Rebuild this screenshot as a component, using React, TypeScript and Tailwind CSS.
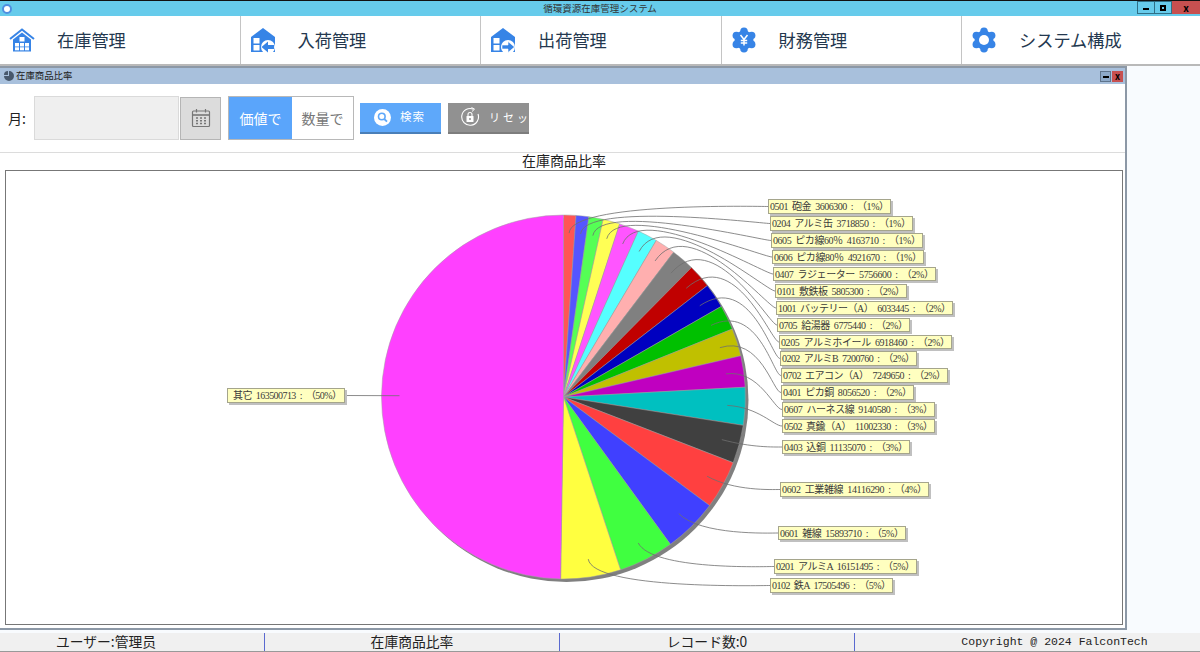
const CX = 563.5;
const CY = 397;
const R = 182;

type Slice = {
  label: string;
  value: number;
  color: string;
  x: number;
  y: number;
  w: number;
  h: number;
};

const slices: Slice[] = [
  { label: "0501 砲金 3606300 : （1%）", value: 3606300, color: "#ff5555", x: 768, y: 199, w: 123, h: 15 },
  { label: "0204 アルミ缶 3718850 : （1%）", value: 3718850, color: "#5555ff", x: 770, y: 216, w: 143, h: 15 },
  { label: "0605 ピカ線60％ 4163710 : （1%）", value: 4163710, color: "#55ff55", x: 771, y: 233, w: 152, h: 15 },
  { label: "0606 ピカ線80％ 4921670 : （1%）", value: 4921670, color: "#ffff55", x: 772, y: 250, w: 152, h: 14 },
  { label: "0407 ラジェーター 5756600 : （2%）", value: 5756600, color: "#ff55ff", x: 773, y: 267, w: 163, h: 14 },
  { label: "0101 敷鉄板 5805300 : （2%）", value: 5805300, color: "#55ffff", x: 775, y: 284, w: 132, h: 14 },
  { label: "1001 バッテリー（A） 6033445 : （2%）", value: 6033445, color: "#ffafaf", x: 776, y: 301, w: 177, h: 14 },
  { label: "0705 給湯器 6775440 : （2%）", value: 6775440, color: "#808080", x: 777, y: 318, w: 133, h: 14 },
  { label: "0205 アルミホイール 6918460 : （2%）", value: 6918460, color: "#c00000", x: 779, y: 335, w: 173, h: 14 },
  { label: "0202 アルミB 7200760 : （2%）", value: 7200760, color: "#0000c0", x: 780, y: 351, w: 137, h: 15 },
  { label: "0702 エアコン（A） 7249650 : （2%）", value: 7249650, color: "#00c000", x: 781, y: 368, w: 167, h: 15 },
  { label: "0401 ピカ銅 8056520 : （2%）", value: 8056520, color: "#c0c000", x: 781, y: 385, w: 133, h: 15 },
  { label: "0607 ハーネス線 9140580 : （3%）", value: 9140580, color: "#c000c0", x: 782, y: 402, w: 153, h: 15 },
  { label: "0502 真鍮（A） 11002330 : （3%）", value: 11002330, color: "#00c0c0", x: 782, y: 419, w: 153, h: 14 },
  { label: "0403 込銅 11135070 : （3%）", value: 11135070, color: "#404040", x: 782, y: 440, w: 128, h: 14 },
  { label: "0602 工業雑線 14116290 : （4%）", value: 14116290, color: "#ff4040", x: 780, y: 482, w: 149, h: 15 },
  { label: "0601 雑線 15893710 : （5%）", value: 15893710, color: "#4040ff", x: 778, y: 526, w: 128, h: 14 },
  { label: "0201 アルミA 16151495 : （5%）", value: 16151495, color: "#40ff40", x: 774, y: 559, w: 143, h: 15 },
  { label: "0102 鉄A 17505496 : （5%）", value: 17505496, color: "#ffff40", x: 770, y: 578, w: 123, h: 15 },
  { label: "其它 163500713 : （50%）", value: 163500713, color: "#ff40ff", x: 227, y: 388, w: 118, h: 15 },
];

const total = slices.reduce((sum, s) => sum + s.value, 0);

function polar(angle: number, radius: number) {
  return {
    x: CX + Math.sin(angle) * radius,
    y: CY - Math.cos(angle) * radius,
  };
}

function PieChart() {
  let acc = 0;
  const parts = slices.map((s) => {
    const start = (acc / total) * Math.PI * 2;
    acc += s.value;
    const end = (acc / total) * Math.PI * 2;
    const a = polar(start, R);
    const b = polar(end, R);
    const large = end - start > Math.PI ? 1 : 0;
    const wedge = `M${CX} ${CY}L${a.x} ${a.y}A${R} ${R} 0 ${large} 1 ${b.x} ${b.y}Z`;
    const mid = (start + end) / 2;
    // the links on the upper right bulge out further than the others
    const bulge = mid < Math.PI / 2 ? 35 * Math.sin(2 * mid) ** 2 : 0;
    const p0 = polar(mid, 164);
    const p1 = polar(mid, 195 + bulge);
    const isLeft = s.x < CX;
    const tx = isLeft ? s.x + s.w : s.x;
    const ty = s.y + s.h / 2;
    const link = isLeft
      ? `M${p0.x} ${p0.y}L${tx} ${ty}`
      : `M${p0.x} ${p0.y}C${p1.x} ${p1.y} ${tx - 8} ${ty} ${tx} ${ty}`;
    return { s, wedge, link };
  });

  return (
    <svg width="1116" height="454" viewBox="6 171 1116 454">
      <circle cx={CX + 3} cy={CY + 3} r={R} fill="#808080" />
      {parts.map((p) => (
        <path key={p.s.label} d={p.wedge} fill={p.s.color} stroke="#a0a0a0" strokeWidth="0.5" />
      ))}
      {parts.map((p) => (
        <path key={p.s.label} d={p.link} fill="none" stroke="#6f6f6f" strokeWidth="0.8" />
      ))}
      {parts.map((p) => (
        <g key={p.s.label}>
          <rect x={p.s.x + 2} y={p.s.y + 2} width={p.s.w} height={p.s.h} fill="#c0c0c0" />
          <rect
            x={p.s.x + 0.5}
            y={p.s.y + 0.5}
            width={p.s.w - 1}
            height={p.s.h - 1}
            fill="#ffffc0"
            stroke="#a5a58c"
          />
          <text
            x={p.s.x < CX ? p.s.x + 6 : p.s.x + 2}
            y={p.s.y + 11}
            textLength={p.s.x < CX ? p.s.w - 9 : p.s.w - 4}
            lengthAdjust="spacing"
            fontSize="10"
            wordSpacing="2"
            fill="#3a3a3a"
            fontFamily="'Liberation Serif','Noto Sans CJK JP',serif"
          >
            {p.s.label}
          </text>
        </g>
      ))}
    </svg>
  );
}

function Gear({ children }: { children: React.ReactNode }) {
  const lobes = [0, 60, 120, 180, 240, 300];
  return (
    <svg width="26" height="26" viewBox="0 0 26 26">
      <circle cx="13" cy="13" r="9.5" fill="#3784e6" />
      {lobes.map((deg) => (
        <circle
          key={deg}
          cx={13 + Math.sin((deg * Math.PI) / 180) * 8.8}
          cy={13 - Math.cos((deg * Math.PI) / 180) * 8.8}
          r="3.8"
          fill="#3784e6"
        />
      ))}
      {children}
    </svg>
  );
}

function StockIcon() {
  return (
    <svg width="26" height="26" viewBox="0 0 26 26">
      <path d="M1 12L13 2.5L25 12" fill="none" stroke="#3784e6" strokeWidth="2" />
      <path d="M4 12.5L13 5.5L22 12.5V24.5H4Z" fill="#3784e6" />
      <rect x="10.5" y="10" width="5" height="4.5" fill="#fff" />
      <rect x="6" y="16" width="4" height="3.5" fill="#fff" />
      <rect x="11" y="16" width="4" height="3.5" fill="#fff" />
      <rect x="16" y="16" width="4" height="3.5" fill="#fff" />
      <rect x="6" y="20.3" width="4" height="3" fill="#fff" />
      <rect x="11" y="20.3" width="4" height="3" fill="#fff" />
      <rect x="16" y="20.3" width="4" height="3" fill="#fff" />
    </svg>
  );
}

function HouseArrowIcon({ out }: { out: boolean }) {
  return (
    <svg width="26" height="26" viewBox="0 0 26 26">
      <path d="M13 1L25 10V25H1V10Z" fill="#3784e6" />
      <rect x="3.5" y="11" width="6" height="5.5" fill="#fff" />
      <rect x="3.5" y="18" width="6" height="5.5" fill="#fff" />
      <circle cx="18" cy="20" r="7" fill="#fff" />
      {out ? (
        <path d="M12 18H18V14.5L24.5 20L18 25.5V22H12Z" fill="#3784e6" stroke="#fff" strokeWidth="0.6" />
      ) : (
        <path d="M24 18H18V14.5L11.5 20L18 25.5V22H24Z" fill="#3784e6" />
      )}
    </svg>
  );
}

const navItems = [
  { text: "在庫管理", icon: <StockIcon /> },
  { text: "入荷管理", icon: <HouseArrowIcon out={false} /> },
  { text: "出荷管理", icon: <HouseArrowIcon out={true} /> },
  {
    text: "財務管理",
    icon: (
      <Gear>
        <path
          d="M9.5 8L13 12.5L16.5 8M13 12.5V18.5M9.8 13.5H16.2M9.8 16H16.2"
          fill="none"
          stroke="#fff"
          strokeWidth="1.5"
        />
      </Gear>
    ),
  },
  {
    text: "システム構成",
    icon: (
      <Gear>
        <circle cx="13" cy="13" r="5" fill="#fff" />
      </Gear>
    ),
  },
];

function CalendarIcon() {
  return (
    <svg width="20" height="20" viewBox="0 0 20 20" fill="none">
      <rect x="1.5" y="3" width="17" height="15.5" rx="1" stroke="#777" strokeWidth="1.2" />
      <path d="M1.5 7H18.5" stroke="#777" strokeWidth="1.6" />
      <path d="M5.5 1V4.5M14.5 1V4.5" stroke="#777" strokeWidth="1.2" />
      <path
        d="M5 10H7M9 10H11M13 10H15M5 12.8H7M9 12.8H11M13 12.8H15M5 15.5H7M9 15.5H11M13 15.5H15"
        stroke="#777"
        strokeWidth="1.5"
      />
    </svg>
  );
}

function SearchBadge() {
  return (
    <svg className="shrink-0" width="17" height="17" viewBox="0 0 17 17">
      <circle cx="8.5" cy="8.5" r="8.5" fill="#fff" />
      <circle cx="7.8" cy="7.5" r="3.3" fill="none" stroke="#5ea8fa" strokeWidth="1.6" />
      <path d="M10.3 10L13 12.6" stroke="#5ea8fa" strokeWidth="1.8" />
    </svg>
  );
}

function ResetIcon() {
  return (
    <svg className="shrink-0" width="20" height="20" viewBox="0 0 20 20" fill="none">
      <path d="M13.5 2.2A8.4 8.4 0 1 0 18 7" stroke="#fff" strokeWidth="1.1" />
      <path d="M11.5 0.5L14.5 2.2L12 4.5" stroke="#fff" strokeWidth="1" />
      <rect x="6.5" y="9" width="7" height="6" rx="0.5" fill="#fff" />
      <path d="M8 9V7.5A2 2 0 0 1 12 7.5V9" stroke="#fff" strokeWidth="1.1" />
      <circle cx="10" cy="12" r="1" fill="#919191" />
    </svg>
  );
}

export default function App() {
  return (
    <div className="w-[1200px] h-[652px] overflow-hidden flex flex-col bg-[#f8fbfe] text-[#222] font-['Noto_Sans_CJK_JP',sans-serif]">
      {/* window title */}
      <div className="h-[16px] shrink-0 border-t border-[#111] bg-[#66cbeb] flex items-center">
        <div className="ml-[2px] w-[10px] h-[10px] rounded-full bg-white border-2 border-[#4f8fe0]" />
        <div className="flex-1 pl-[51px] text-center text-[9.5px] leading-none text-[#333]">循環資源在庫管理システム</div>
        <div className="flex h-[13px] self-start">
          <div className="w-[18px] border border-[#2f6f86] flex items-end justify-center pb-[3px]">
            <div className="w-[6px] h-[2px] bg-black" />
          </div>
          <div className="w-[17px] border-y border-r border-[#2f6f86] flex items-center justify-center">
            <div className="w-[6px] h-[6px] border-2 border-black" />
          </div>
          <div className="w-[28px] bg-[#c75050] flex items-center justify-center text-[10px] font-bold leading-none text-black">
            x
          </div>
        </div>
      </div>

      {/* main nav */}
      <div className="h-[50px] shrink-0 bg-white grid grid-cols-[240.5px_240.5px_240.5px_240.5px_1fr] border-b-2 border-[#b9b9b9]">
        {navItems.map((item, i) => (
          <div
            key={item.text}
            className={`flex items-center pl-[9px] ${i < 4 ? "border-r border-[#c4c4c4]" : ""}`}
          >
            <div className="w-[48px] shrink-0">{item.icon}</div>
            <span className="text-[17.2px] leading-none text-[#24384f]">{item.text}</span>
          </div>
        ))}
      </div>

      {/* inner window */}
      <div className="w-[1127px] h-[564px] shrink-0 flex flex-col bg-white border-t-2 border-r-2 border-b-2 border-[#8c98a6]">
        <div className="h-[16px] shrink-0 bg-[#a8c0dc] flex items-center pl-[4px] pr-[2px]">
          <svg width="10" height="10" viewBox="0 0 10 10">
            <path d="M5 0A5 5 0 1 1 0 5H5Z" fill="#48586c" />
            <path d="M4 0A4 4 0 0 0 0 4H4Z" fill="#48586c" />
          </svg>
          <span className="ml-[2px] text-[9.4px] leading-none text-[#222]">在庫商品比率</span>
          <div className="ml-auto flex gap-[1px]">
            <div className="w-[11px] h-[11px] bg-[#8da9c9] border border-[#5f748c] flex items-center justify-center">
              <div className="w-[6px] h-[2px] bg-black mt-[2px]" />
            </div>
            <div className="w-[11px] h-[11px] bg-[#c75050] flex items-center justify-center text-[9px] font-bold leading-none text-black">
              x
            </div>
          </div>
        </div>

        <div className="h-[69px] shrink-0 flex items-center pl-[8px] border-b border-[#dcdcdc]">
          <span className="w-[26px] text-[14px] leading-none">月:</span>
          <div className="w-[145px] h-[44px] bg-[#efefef] border border-[#dadada]" />
          <div className="w-[41px] h-[43px] ml-[1px] bg-[#dcdcdc] border border-[#b5b5b5] flex items-center justify-center">
            <CalendarIcon />
          </div>
          <div className="ml-[7px] flex h-[44px] w-[126px] border border-[#b8b8b8] text-[14px]">
            <div className="w-[63px] bg-[#5aa5fb] text-white flex items-center justify-center">価値で</div>
            <div className="flex-1 bg-white text-[#777] flex items-center justify-center">数量で</div>
          </div>
          <div className="ml-[6px] w-[81px] h-[31px] bg-[#5ea8fa] border-b-2 border-[#4a7fb8] flex items-center pl-[14px]">
            <SearchBadge />
            <span className="ml-[9px] text-[11.5px] tracking-[1px] text-white">検索</span>
          </div>
          <div className="ml-[7px] w-[81px] h-[31px] bg-[#919191] border-b-2 border-[#7d7d7d] flex items-center pl-[12px]">
            <ResetIcon />
            <span className="ml-[9px] text-[11px] tracking-[3px] whitespace-nowrap text-white">リセッ</span>
          </div>
        </div>

        <div className="flex-1 min-h-0 flex flex-col pl-[5px] pr-[2px] pb-[3px]">
          <div className="h-[17px] shrink-0 flex items-center justify-center text-[14px] leading-none text-[#222] font-['Liberation_Serif','Noto_Sans_CJK_JP',serif]">
            在庫商品比率
          </div>
          <div className="h-[456px] border border-[#777] bg-white overflow-hidden">
            <PieChart />
          </div>
        </div>
      </div>

      {/* status bar */}
      <div className="mt-[3px] h-[19px] shrink-0 bg-[#f0f0f0] border-b border-[#999] flex text-[13.8px] leading-none text-[#222]">
        <div className="w-[265px] pr-[52px] border-r border-[#5a6ad0] flex items-center justify-center">
          ユーザー:管理员
        </div>
        <div className="w-[295px] border-r border-[#5a6ad0] flex items-center justify-center">在庫商品比率</div>
        <div className="w-[295px] border-r border-[#5a6ad0] flex items-center justify-center">レコード数:0</div>
        <div className="flex-1 pl-[54px] flex items-center justify-center text-[11.5px] font-['Liberation_Mono',monospace]">
          Copyright @ 2024 FalconTech
        </div>
      </div>
    </div>
  );
}
